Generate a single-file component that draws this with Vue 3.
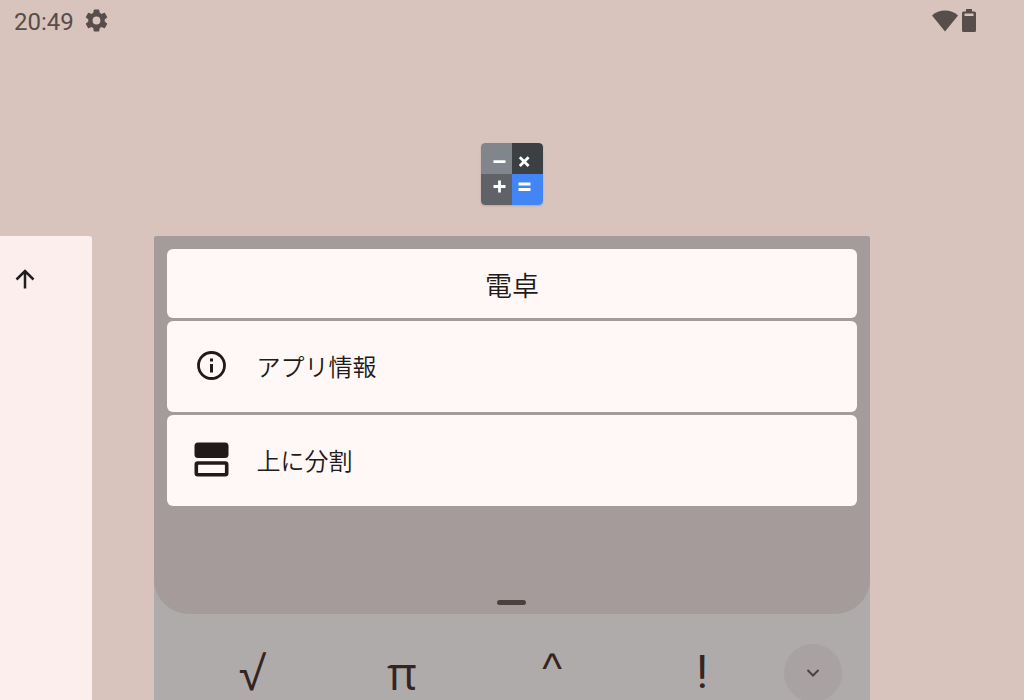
<script setup>
const keys = [
  { label: '√', name: '平方根', face: 'root' },
  { label: 'π', name: '円周率', face: 'pi' },
  { label: '^', name: 'べき乗', face: 'power' },
  { label: '!', name: '階乗', face: 'factorial' },
]
</script>

<template>
  <div class="overview">
    <header class="status">
      <span class="clock">20:49</span>
      <svg class="gear" viewBox="2 2 20 20" aria-hidden="true">
        <path d="M19.140 12.940c.04-.3.06-.61.06-.94s-.02-.64-.07-.94l2.030-1.580a.49.49 0 0 0 .12-.61l-1.920-3.320a.49.49 0 0 0-.59-.22l-2.390.96a7 7 0 0 0-1.620-.94l-.36-2.540A.48.48 0 0 0 13.920 2.400h-3.840a.48.48 0 0 0-.47.41l-.36 2.540a7.400 7.400 0 0 0-1.620.94l-2.390-.96a.48.48 0 0 0-.59.22L2.740 8.870a.48.48 0 0 0 .12.61l2.030 1.580a6 6 0 0 0-.02 1.880l-2.030 1.580a.49.49 0 0 0-.12.61l1.920 3.320c.12.22.37.29.59.22l2.390-.96c.5.38 1.030.7 1.620.94l.36 2.540c.05.24.24.41.48.41h3.840c.24 0 .44-.17.47-.41l.36-2.540a7 7 0 0 0 1.620-.94l2.390.96c.22.08.47 0 .59-.22l1.920-3.320a.48.48 0 0 0-.12-.61zM12 15.400a3.400 3.400 0 1 1 0-6.800 3.400 3.400 0 0 1 0 6.800z" />
      </svg>
      <div class="indicators">
        <svg class="wifi" viewBox="0 0 26 22" aria-hidden="true">
          <path d="M0 5.500Q5.500 0.500 13 0.500T26 5.500L13 21.500z" />
        </svg>
        <svg class="battery" viewBox="0 0 14 23" aria-hidden="true">
          <path fill-rule="evenodd" d="M4 0h6v2.500h2.500A1.500 1.500 0 0 1 14 4v17.500a1.500 1.500 0 0 1-1.500 1.500h-11A1.500 1.500 0 0 1 0 21.500V4a1.500 1.500 0 0 1 1.500-1.500H4zM2.500 4.500v2.500h9V4.500z" />
        </svg>
      </div>
    </header>

    <div class="app-icon">
      <svg viewBox="0 0 62 62" role="img" aria-label="電卓">
        <defs>
          <clipPath id="tile"><rect width="62" height="62" rx="4" /></clipPath>
        </defs>
        <g clip-path="url(#tile)">
          <path fill="#80868b" d="M0 0h31v31H0z" />
          <path fill="#3c4043" d="M31 0h31v31H31z" />
          <path fill="#5f6368" d="M0 31h31v31H0z" />
          <path fill="#4285f4" d="M31 31h31v31H31z" />
        </g>
        <path fill="none" stroke="#fff" stroke-width="2.800" d="M12.500 18.700h12M38.800 14.200l8.800 8.800m0-8.800l-8.800 8.800M12.500 43.500h12M18.500 37.500v12M37.500 41h12M37.500 46.500h12" />
      </svg>
    </div>

    <main class="recents">
      <section class="previous">
        <button class="up" aria-label="上へ">
          <svg viewBox="0 0 20 20"><path d="M10 19.500V2M1.500 10.500L10 2l8.500 8.500" /></svg>
        </button>
      </section>

      <section class="task">
        <div class="display">
          <div class="menu">
            <h1>電卓</h1>
            <button class="item">
              <svg viewBox="0 0 36 36" aria-hidden="true">
                <circle cx="18.500" cy="17.500" r="13" fill="none" stroke="#201a18" stroke-width="2.800" />
                <path d="M17 10.500h3v3h-3zM17 16h3v8.500h-3z" />
              </svg>
              <span>アプリ情報</span>
            </button>
            <button class="item">
              <svg viewBox="0 0 36 36" aria-hidden="true">
                <rect x="1.500" y="0.500" width="34" height="15.500" rx="3.500" />
                <rect x="3.300" y="21" width="30.400" height="11.700" rx="1.500" fill="none" stroke="#201a18" stroke-width="3.600" />
              </svg>
              <span>上に分割</span>
            </button>
          </div>
          <div class="handle"></div>
        </div>
        <div class="keypad">
          <button v-for="k in keys" :key="k.label" class="key" :class="k.face" :aria-label="k.name">{{ k.label }}</button>
          <button class="expand" aria-label="展開">
            <svg viewBox="0 0 14 9"><path d="M1.500 1L7 6.500 12.500 1" /></svg>
          </button>
        </div>
      </section>
    </main>
  </div>
</template>

<style>
body {
  background: #d8c3bd;
}
</style>

<style scoped>
.overview {
  height: 100vh;
  overflow: hidden;
  display: flex;
  flex-direction: column;
  background: #d8c3bd;
  color: #201a18;
  font-family: Roboto, "Noto Sans CJK JP", sans-serif;
}
button {
  border: 0;
  padding: 0;
  margin: 0;
  background: none;
  color: inherit;
  font: inherit;
}
svg {
  display: block;
  flex: none;
}
.status {
  display: flex;
  align-items: center;
  height: 41px;
  padding: 0 48px 1px 14px;
  color: #574d4a;
  fill: #574d4a;
}
.clock {
  padding-top: 2px;
  font-size: 24px;
  font-weight: 450;
  line-height: 28px;
}
.gear {
  width: 23px;
  height: 23px;
  margin-left: 11px;
}
.indicators {
  display: flex;
  align-items: center;
  gap: 4px;
  margin-left: auto;
}
.wifi {
  width: 26px;
  height: 22px;
}
.battery {
  width: 14px;
  height: 23px;
}
.app-icon {
  display: flex;
  justify-content: center;
  padding: 101px 0 31px;
}
.app-icon svg {
  width: 62px;
  height: 62px;
  border-radius: 4px;
  box-shadow: 0 1px 2px rgba(60, 40, 40, 0.2);
}
.recents {
  flex: 1;
  min-height: 0;
  display: grid;
  grid-template-columns: 9% 70%;
  column-gap: 6%;
}
.previous {
  background: #fceeec;
  border-radius: 0 3px 0 0;
}
.up {
  display: block;
  margin: 33px 0 0 15px;
}
.up svg {
  width: 20px;
  height: 20px;
  fill: none;
  stroke: #201f1f;
  stroke-width: 2.5;
}
.task {
  display: flex;
  flex-direction: column;
  background: #afabab;
  border-radius: 3px 3px 0 0;
}
.display {
  display: flex;
  flex-direction: column;
  flex: none;
  padding: 13px 13px 9px;
  background: #a59b9b;
  border-radius: 3px 3px 35px 35px;
}
.menu {
  display: flex;
  flex-direction: column;
  gap: 3px;
  font-weight: 350;
}
.menu h1,
.item {
  border-radius: 6px;
  background: #fff8f6;
}
.menu h1 {
  margin: 0;
  padding: 18px 0 10px;
  font-size: 27px;
  font-weight: 350;
  line-height: 41px;
  text-align: center;
}
.item {
  display: flex;
  align-items: center;
  gap: 28px;
  height: 91px;
  padding: 0 26px;
  font-size: 24px;
  line-height: 36px;
  text-align: left;
  fill: #201a18;
}
.item svg {
  width: 36px;
  height: 36px;
  margin-bottom: 2px;
}
.item span {
  padding-top: 2px;
}
.handle {
  align-self: center;
  width: 29px;
  height: 5px;
  margin-top: 94px;
  border-radius: 3px;
  background: #4e403e;
}
.keypad {
  display: grid;
  grid-template-columns: repeat(4, 1fr) 65px;
  align-items: start;
  padding: 30px 28px 0 23px;
  color: #362422;
}
.key {
  font-size: 46px;
  line-height: 56px;
}
.root,
.pi {
  font-family: "Open Sans", sans-serif;
  font-weight: 500;
}
.power {
  font-family: "Liberation Sans", sans-serif;
  font-size: 42px;
  line-height: 50px;
}
.expand {
  justify-self: end;
  display: grid;
  place-items: center;
  width: 58px;
  height: 58px;
  border-radius: 50%;
  background: #a9a2a2;
}
.expand svg {
  width: 14px;
  height: 9px;
  fill: none;
  stroke: #4e403e;
  stroke-width: 2;
}
</style>
